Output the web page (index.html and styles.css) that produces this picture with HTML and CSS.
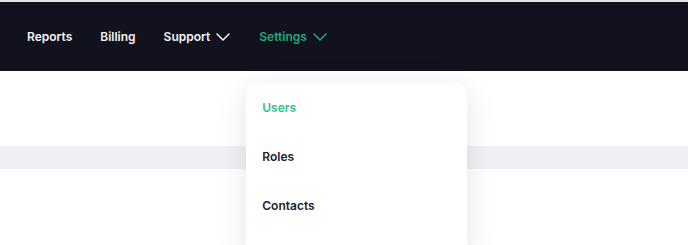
FILE: index.html
```html
<!DOCTYPE html>
<html lang="en">
<head>
  <meta charset="UTF-8" />
  <title>Settings Menu</title>
  <link rel="stylesheet" href="styles.css">
</head>
<body>

  <div class="top-bar">
    <nav class="nav">
      <a href="#" class="nav-link">Reports</a>
      <a href="#" class="nav-link">Billing</a>
      <a href="#" class="nav-link">Support
        <svg class="chevron" viewBox="0 0 14 8" width="14" height="8"><path d="M1 1l6 6 6-6" /></svg>
      </a>
      <div class="nav-menu">
        <a href="#" class="nav-link active">Settings
          <svg class="chevron" viewBox="0 0 14 8" width="14" height="8"><path d="M1 1l6 6 6-6" /></svg>
        </a>
        <div class="dropdown">
          <a href="#" class="dropdown-item active">Users</a>
          <a href="#" class="dropdown-item">Roles</a>
          <a href="#" class="dropdown-item">Contacts</a>
        </div>
      </div>
    </nav>
  </div>

  <div class="page">
    <div class="band"></div>
  </div>

</body>
</html>
```

FILE: styles.css
```css
body {
  margin: 0;
  font-family: 'Inter', 'Noto Sans', sans-serif;
  background-color: #ffffff;
  color: #1f2129;
  border-top: 2px solid #e4e5e8;
}
.top-bar {
  background-color: #11121e;
  height: 69px;
  display: flex;
  align-items: center;
  padding: 0 27px;
}
.nav {
  display: flex;
  align-items: center;
  gap: 28px;
}
.nav-link {
  display: flex;
  align-items: center;
  color: #f4f4f6;
  text-decoration: none;
  font-size: 12px;
  font-weight: 600;
}
.nav-link.active {
  color: #1dab7c;
}
.chevron {
  margin-left: 6px;
  fill: none;
  stroke: currentColor;
  stroke-width: 1.5;
  stroke-linecap: round;
  stroke-linejoin: round;
}
.nav-menu {
  position: relative;
  margin-left: 1px;
}
.dropdown {
  position: absolute;
  top: 54px;
  left: -13px;
  width: 221px;
  padding-bottom: 30px;
  background: #ffffff;
  border-radius: 12px;
  box-shadow: 0 6px 32px rgba(20, 22, 40, 0.1);
  z-index: 10;
}
.dropdown-item {
  display: flex;
  align-items: center;
  height: 49px;
  padding: 0 16px;
  color: #1f2129;
  text-decoration: none;
  font-size: 12px;
  font-weight: 600;
}
.dropdown-item.active {
  color: #34bf8a;
}
.page {
  padding-top: 75px;
  min-height: 150px;
}
.band {
  height: 23px;
  background-color: #eff0f3;
}
```
